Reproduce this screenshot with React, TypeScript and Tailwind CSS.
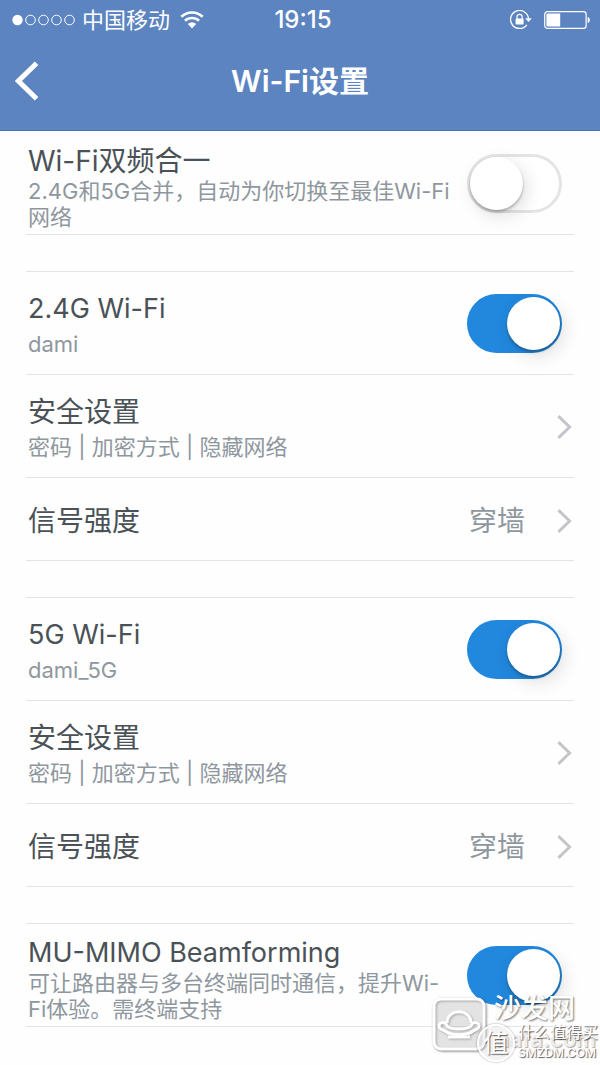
import React, { useState, type JSX, type ReactNode } from "react";

function StatusBar(): JSX.Element {
  return (
    <div className="grid h-10 grid-cols-3 items-center pr-2.5 pl-3 text-white">
      <div className="flex items-center gap-1.5">
        <svg width="64" height="12" viewBox="0 0 64 12" fill="none" stroke="currentColor" aria-hidden="true">
          <circle cx="5.5" cy="6" r="5.2" fill="currentColor" stroke="none" />
          <circle cx="18.5" cy="6" r="4.8" />
          <circle cx="31.5" cy="6" r="4.8" />
          <circle cx="44.5" cy="6" r="4.8" />
          <circle cx="57.5" cy="6" r="4.8" />
        </svg>
        <span className="text-[22px] leading-7 whitespace-nowrap">中国移动</span>
        <svg
          width="24"
          height="18"
          viewBox="0 0 24 18"
          fill="none"
          stroke="currentColor"
          className="ml-1"
          aria-hidden="true"
        >
          <path d="M1.3 5.8a15.4 15.4 0 0 1 21.4 0" strokeWidth="2.7" />
          <path d="M5 9.8a10 10 0 0 1 14 0" strokeWidth="2.6" />
          <path d="M12 17.4 7.8 13a6 6 0 0 1 8.4 0Z" fill="currentColor" stroke="none" />
        </svg>
      </div>
      <time className="pl-1 text-center text-[24px] leading-7 font-medium">19:15</time>
      <div className="flex items-center justify-end gap-3">
        <svg width="22" height="20" viewBox="0 0 22 20" fill="none" stroke="currentColor" aria-hidden="true">
          <path d="M16.8 14.8A9 9 0 1 1 18.5 8.5" strokeWidth="1.3" />
          <path d="M15.2 8.2h6.6l-3.3 3.8Z" fill="currentColor" stroke="none" />
          <rect x="5.6" y="8.6" width="8" height="6" rx="0.8" fill="currentColor" stroke="none" />
          <path d="M7 9V7a2.6 2.6 0 0 1 5.2 0v2" strokeWidth="1.2" />
        </svg>
        <svg width="46" height="18" viewBox="0 0 46 18" fill="none" stroke="currentColor" aria-hidden="true">
          <rect x="0.7" y="0.7" width="41.4" height="16.6" rx="2.6" strokeWidth="1.2" />
          <rect x="2.4" y="2.4" width="13.8" height="13.2" rx="0.8" fill="currentColor" stroke="none" />
          <path d="M43.6 6c1.5.3 2.2 1.4 2.2 3s-.7 2.7-2.2 3Z" fill="currentColor" stroke="none" />
        </svg>
      </div>
    </div>
  );
}

function NavBar({ title }: { title: string }): JSX.Element {
  return (
    <div className="grid h-[90px] grid-cols-[60px_1fr_60px] items-center pb-2 text-white">
      <button type="button" aria-label="返回" className="pl-[15px]">
        <svg width="24" height="40" viewBox="0 0 24 40" fill="none" stroke="currentColor" strokeWidth="5" aria-hidden="true">
          <path d="M21.6 2.2 3.4 20l18.2 17.8" />
        </svg>
      </button>
      <h1 className="text-center text-[30px] leading-9 font-semibold">{title}</h1>
    </div>
  );
}

function Chevron(): JSX.Element {
  return (
    <svg width="15" height="24" viewBox="0 0 15 24" fill="none" stroke="#c4c5ca" strokeWidth="3" aria-hidden="true">
      <path d="M1.4 1.2 12.6 12 1.4 22.8" />
    </svg>
  );
}

type SwitchRowProps = {
  id: string;
  title: string;
  note: string;
  defaultOn?: boolean;
  long?: boolean;
};

function SwitchRow({ id, title, note, defaultOn = false, long = false }: SwitchRowProps): JSX.Element {
  const [on, setOn] = useState(defaultOn);
  // Inter runs wide next to the CJK face, so all-Latin titles are set one step down
  const latin = /^[ -~]+$/.test(title);

  return (
    <div className="flex min-h-[103px] items-center gap-3 border-b border-[#e4e4e4] pr-3 pl-0.5">
      <label htmlFor={id} className={["flex flex-1 flex-col", long ? "pt-2" : "gap-1 pt-0.5"].join(" ")}>
        <span
          className={[
            "text-[#4a5157]",
            latin ? "text-[27px]" : "text-[28px]",
            long ? "leading-[34px]" : "leading-9",
          ].join(" ")}
        >
          {title}
        </span>
        <span className="text-[22px] leading-[26px] text-[#8f979e]">{note}</span>
      </label>
      <input
        id={id}
        type="checkbox"
        role="switch"
        checked={on}
        onChange={(e) => setOn(e.target.checked)}
        className={[
          "h-[59px] w-[95px] shrink-0 cursor-pointer appearance-none rounded-full border-3 transition",
          "before:block before:size-[53px] before:rounded-full before:bg-white before:transition",
          "before:shadow-[0_2px_3px_rgba(0,0,0,0.28),4px_6px_18px_rgba(0,0,0,0.12)]",
          on ? "border-[#2288dd] bg-[#2288dd] before:translate-x-[37px]" : "border-[#e4e4e4] bg-white",
        ].join(" ")}
      />
    </div>
  );
}

function SecurityRow(): JSX.Element {
  return (
    <button
      type="button"
      className="flex min-h-[103px] w-full items-center justify-between border-b border-[#e4e4e4] px-0.5 pt-0.5 text-left"
    >
      <span className="flex flex-col gap-1">
        <span className="text-[28px] leading-9 text-[#4a5157]">安全设置</span>
        <span className="text-[22px] leading-[26px] text-[#8f979e]">密码 | 加密方式 | 隐藏网络</span>
      </span>
      <Chevron />
    </button>
  );
}

function SignalRow({ value }: { value: string }): JSX.Element {
  return (
    <button
      type="button"
      className="flex min-h-[83px] w-full items-center border-b border-[#e4e4e4] px-0.5 pt-1 text-left text-[28px] leading-9"
    >
      <span className="flex-1 text-[#4a5157]">信号强度</span>
      <span className="mr-8 text-[#8f979e]">{value}</span>
      <Chevron />
    </button>
  );
}

function Group({ children }: { children: ReactNode }): JSX.Element {
  return <section className="mt-9 border-t border-[#e4e4e4]">{children}</section>;
}

function Watermark(): JSX.Element {
  return (
    <div className="pointer-events-none absolute right-0 bottom-0 h-[70px] w-[170px] text-white">
      <svg
        width="58"
        height="58"
        viewBox="0 0 58 58"
        fill="none"
        stroke="currentColor"
        strokeWidth="3"
        className="absolute top-0 left-0 drop-shadow-[1px_1px_1px_rgba(0,0,0,0.5)]"
        aria-hidden="true"
      >
        <rect x="4" y="4" width="50" height="50" rx="7" fill="#ffffff" fillOpacity="0.3" />
        <path d="M17 28c0-15 24-15 24 0" />
        <path d="M17 31c-2-5-8-4-8 0 0 3 4 4 6 5 6 5 22 5 28 0 2-1 6-2 6-5 0-4-6-5-8 0-4 4-20 4-24 0Z" />
        <path d="M18 42h22" />
      </svg>
      <span className="absolute -top-1 left-16 text-[27px] leading-9 font-medium whitespace-nowrap [text-shadow:1px_1px_2px_rgba(0,0,0,0.55)]">
        沙发网
      </span>
      <span className="absolute top-[28px] left-[66px] text-[22px] leading-8 font-semibold whitespace-nowrap text-[#eeeeee] [text-shadow:1px_1px_1px_rgba(0,0,0,0.35)]">
        hafa.com
      </span>
      <span className="absolute top-[29px] left-[47px] grid size-[38px] place-items-center rounded-full border-2 border-white bg-[#d8d8d8]/30 text-[25px] leading-none shadow-[0_0_2px_rgba(0,0,0,0.5)] [text-shadow:1px_1px_1px_rgba(0,0,0,0.6)]">
        值
      </span>
      <span className="absolute top-[27px] left-[88px] text-[16px] leading-5 whitespace-nowrap [text-shadow:1px_1px_1px_rgba(0,0,0,0.65)]">
        什么值得买
      </span>
      <span className="absolute top-[50px] left-[88px] text-[12px] leading-4 font-medium [text-shadow:1px_1px_1px_rgba(0,0,0,0.65)]">
        SMZDM.COM
      </span>
    </div>
  );
}

export default function App(): JSX.Element {
  return (
    <div
      lang="zh-CN"
      className="relative min-h-screen overflow-hidden bg-[#fefefe] font-[Inter,'Noto_Sans_CJK_SC',sans-serif]"
    >
      <header className="border-b border-[#3f74bd] bg-[#5b84c0]">
        <StatusBar />
        <NavBar title="Wi-Fi设置" />
      </header>

      <main className="px-[26px] pt-px">
        <SwitchRow id="dual-band" title="Wi-Fi双频合一" note="2.4G和5G合并，自动为你切换至最佳Wi-Fi网络" long />
        <Group>
          <SwitchRow id="wifi-24g" title="2.4G Wi-Fi" note="dami" defaultOn />
          <SecurityRow />
          <SignalRow value="穿墙" />
        </Group>
        <Group>
          <SwitchRow id="wifi-5g" title="5G Wi-Fi" note="dami_5G" defaultOn />
          <SecurityRow />
          <SignalRow value="穿墙" />
        </Group>
        <Group>
          <SwitchRow
            id="mu-mimo"
            title="MU-MIMO Beamforming"
            note="可让路由器与多台终端同时通信，提升Wi-Fi体验。需终端支持"
            defaultOn
            long
          />
        </Group>
      </main>

      <Watermark />
    </div>
  );
}
